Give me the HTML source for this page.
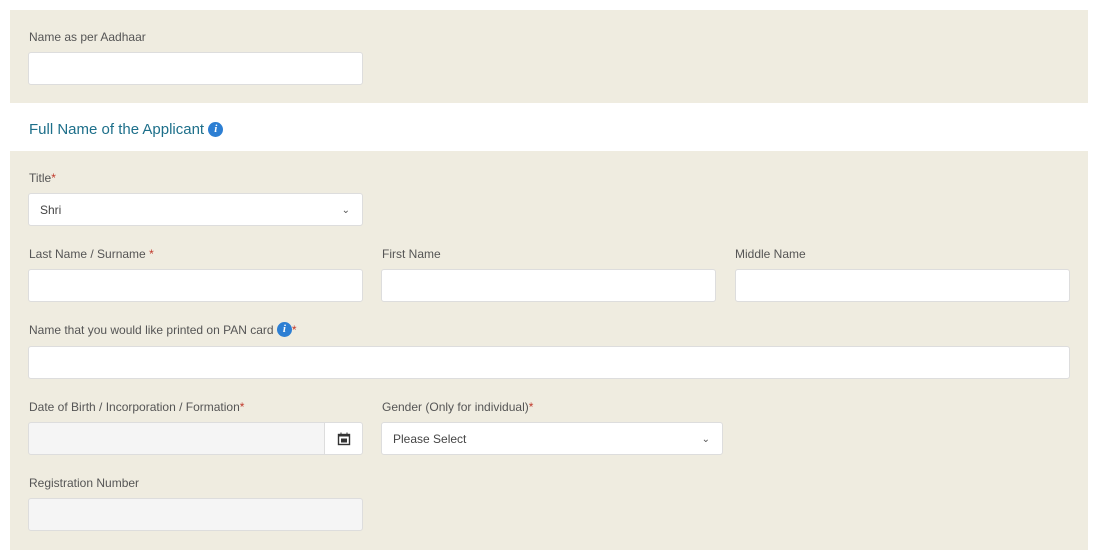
<!DOCTYPE html>
<html><head><style>
body{margin:0;width:1098px;height:558px;background:#fff;font-family:"Liberation Sans",Arial,sans-serif;position:relative;overflow:hidden}
.p{position:absolute;left:10px;width:1078px;background:#efece0}
.l{position:absolute;font-size:12px;color:#555;line-height:14px}
.r{color:#c0392b}
.i{position:absolute;background:#fff;border:1px solid #ddd;border-radius:3px;height:31px;box-sizing:border-box;font-size:12px;color:#444;line-height:31px;padding-left:11px}
.g{background:#f5f5f5}
.ic{display:inline-block;width:15px;height:15px;border-radius:50%;background:#2d7fd3;color:#fff;font:italic bold 11px/15px "Liberation Serif",serif;text-align:center;vertical-align:top}
.ch{position:absolute;right:12px;top:0;font-size:10px;color:#555}
</style></head><body>
<div class="p" style="top:10px;height:93px"></div>
<div class="p" style="top:151px;height:399px"></div>
<div class="l" style="left:29px;top:30px">Name as per Aadhaar</div>
<div class="i" style="left:28px;top:52px;width:335px;height:33px"></div>
<div style="position:absolute;left:29px;top:121px;font-size:15px;line-height:17px;color:#1d6f8a">Full Name of the Applicant <span class="ic" style="margin-top:1px">i</span></div>
<div class="l" style="left:29px;top:171px">Title<span class="r">*</span></div>
<div class="i" style="left:28px;top:193px;width:335px;height:33px;line-height:33px">Shri<span class="ch">&#8964;</span></div>
<div class="l" style="left:29px;top:247px">Last Name / Surname <span class="r">*</span></div>
<div class="l" style="left:382px;top:247px">First Name</div>
<div class="l" style="left:735px;top:247px">Middle Name</div>
<div class="i" style="left:28px;top:269px;width:335px;height:33px"></div>
<div class="i" style="left:381px;top:269px;width:335px;height:33px"></div>
<div class="i" style="left:735px;top:269px;width:335px;height:33px"></div>
<div class="l" style="left:29px;top:323px">Name that you would like printed on PAN card <span class="ic" style="margin-top:-1px">i</span><span class="r">*</span></div>
<div class="i" style="left:28px;top:346px;width:1042px;height:33px"></div>
<div class="l" style="left:29px;top:400px">Date of Birth / Incorporation / Formation<span class="r">*</span></div>
<div class="l" style="left:382px;top:400px">Gender (Only for individual)<span class="r">*</span></div>
<div class="i g" style="left:28px;top:422px;width:297px;height:33px;border-radius:3px 0 0 3px"></div>
<div class="i" style="left:324px;top:422px;width:39px;height:33px;padding:0;text-align:center;border-radius:0 3px 3px 0">
<svg width="14" height="14" viewBox="0 0 14 14" style="margin-top:9px"><rect x="1.5" y="2.5" width="11" height="10" fill="none" stroke="#333" stroke-width="1.4"/><rect x="1.5" y="2.5" width="11" height="2" fill="#333"/><rect x="4" y="6.5" width="6" height="4" fill="#333"/><line x1="4" y1="0.5" x2="4" y2="3" stroke="#333"/><line x1="10" y1="0.5" x2="10" y2="3" stroke="#333"/></svg></div>
<div class="i" style="left:381px;top:422px;width:342px;height:33px;line-height:33px">Please Select<span class="ch">&#8964;</span></div>
<div class="l" style="left:29px;top:476px">Registration Number</div>
<div class="i g" style="left:28px;top:498px;width:335px;height:33px"></div>
</body></html>
